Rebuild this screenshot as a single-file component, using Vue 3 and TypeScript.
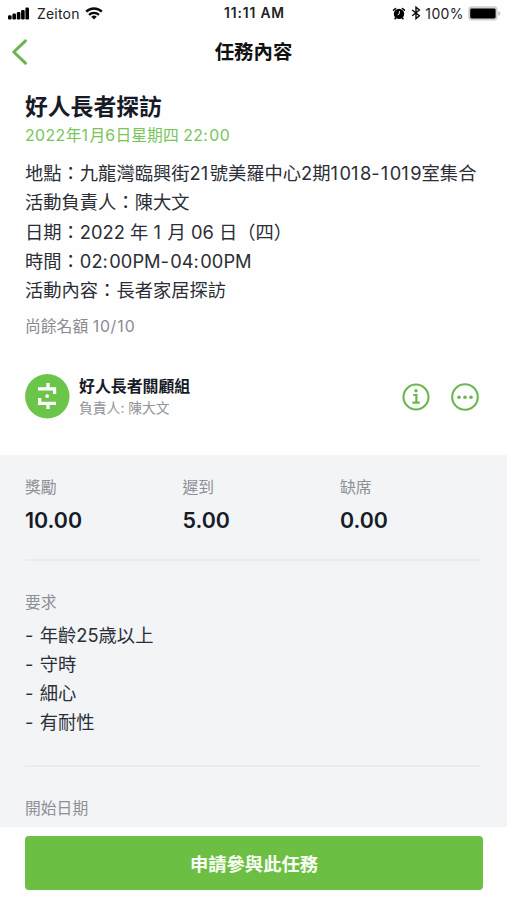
<script setup lang="ts">
interface Stat {
  label: string
  value: string
}

interface Run {
  text: string
  kind: string
}

const date = '2022年1月6日星期四 22:00'
const quota = '尚餘名額 10/10'

const details: string[] = [
  '地點：九龍灣臨興街21號美羅中心2期1018-1019室集合',
  '活動負責人：陳大文',
  '日期：2022 年 1 月 06 日（四）',
  '時間：02:00PM-04:00PM',
  '活動內容：長者家居探訪',
]

const stats: Stat[] = [
  { label: '獎勵', value: '10.00' },
  { label: '遲到', value: '5.00' },
  { label: '缺席', value: '0.00' },
]

const requirements: string[] = ['- 年齡25歳以上', '- 守時', '- 細心', '- 有耐性']

// Narrow Latin glyphs get extra tracking so that they sit evenly beside the ideographs.
function runs(text: string): Run[] {
  const parts = text.match(/[1:]+|[-/]+|[02-9A-Za-z]+|[^0-9A-Za-z:/-]+/g) ?? []
  return parts.map((part) => ({
    text: part,
    kind: /^[1:]/.test(part) ? 'narrow' : /^[-/]/.test(part) ? 'dash' : /^[0-9A-Za-z]/.test(part) ? 'latin' : 'han',
  }))
}
</script>

<template>
  <div class="screen">
    <div class="status">
      <div class="status-left">
        <svg class="signal" width="22" height="13" viewBox="0 0 22 13">
          <rect x="0" y="8.2" width="3.6" height="4.3" rx="1.2" />
          <rect x="4.4" y="6.6" width="3.6" height="5.9" rx="1.2" />
          <rect x="8.8" y="4.9" width="3.6" height="7.6" rx="1.2" />
          <rect x="13.1" y="2.9" width="3.6" height="9.6" rx="1.2" />
          <rect x="17.4" y="0.6" width="3.6" height="11.9" rx="1.2" />
        </svg>
        <span class="carrier">Zeiton</span>
        <svg class="wifi" width="18" height="13" viewBox="0 0 18 13" fill="none" stroke="#0a0a0a">
          <path d="M1.2 4.7a11 11 0 0 1 15.6 0" stroke-width="2.4" />
          <path d="M4 7.9a7 7 0 0 1 10 0" stroke-width="2.3" />
          <path d="M9 12.6 6.2 9.8a4 4 0 0 1 5.6 0z" fill="#0a0a0a" stroke="none" />
        </svg>
      </div>
      <span class="clock">11:11 AM</span>
      <div class="status-right">
        <svg class="alarm" width="14" height="13" viewBox="0 0 14 13">
          <circle cx="7" cy="6.9" r="5.2" />
          <path d="M1.6 3.2 3.6 1.5M12.4 3.2 10.4 1.5M3.8 10.8l-.8.9M10.2 10.8l.8.9" stroke="#0a0a0a" stroke-width="1.6" stroke-linecap="round" />
          <path d="M7.5 4.5 7.1 7.1 6 7.7" fill="none" stroke="#fff" stroke-width="0.9" stroke-linecap="round" />
        </svg>
        <svg class="bluetooth" width="10" height="14" viewBox="0 0 10 14" fill="none" stroke="#0a0a0a" stroke-width="1.4">
          <path d="m1.2 4 7.2 5.8L5 12.6V1.2L8.4 4 1.2 9.8" />
        </svg>
        <span class="percent">100%</span>
        <svg class="battery" width="33" height="15" viewBox="0 0 33 15">
          <rect x="0.2" y="0.3" width="29.4" height="14.2" rx="3.4" fill="#cfcfcf" />
          <rect x="2.2" y="2.5" width="25.4" height="10" rx="1.4" />
          <path d="M30.4 5v5a3.2 3.2 0 0 0 1.9-2.5A3.2 3.2 0 0 0 30.4 5z" fill="#bdbdbd" />
        </svg>
      </div>
    </div>

    <header class="nav">
      <svg class="back" width="17" height="26" viewBox="0 0 17 26" fill="none">
        <path d="M14.4 1.8 2.8 13l11.6 11.2" stroke="#69b551" stroke-width="3" stroke-linecap="round" stroke-linejoin="round" />
      </svg>
      <h1 class="nav-title">任務內容</h1>
    </header>

    <section class="intro">
      <h2 class="title">好人長者探訪</h2>
      <p class="date"><span v-for="(run, i) in runs(date)" :key="i" :class="run.kind">{{ run.text }}</span></p>
      <p v-for="line in details" :key="line" class="detail"><span v-for="(run, i) in runs(line)" :key="i" :class="run.kind">{{ run.text }}</span></p>
      <p class="quota"><span v-for="(run, i) in runs(quota)" :key="i" :class="run.kind">{{ run.text }}</span></p>
      <div class="host">
        <svg class="avatar" width="45" height="45" viewBox="0 0 45 45">
          <circle cx="22.3" cy="22.3" r="22.2" fill="#6cc54b" />
          <g fill="none" stroke="#fff" stroke-width="3.2">
            <path d="M23 9v6M13 14.9h16.6V20" />
            <path d="M23 35v-6M31 29.4H14.6V24" />
          </g>
          <circle cx="22.2" cy="22.1" r="1.9" fill="#fff" />
        </svg>
        <div class="host-text">
          <div class="host-name">好人長者關顧組</div>
          <div class="host-lead">負責人: 陳大文</div>
        </div>
        <svg class="action" width="28" height="28" viewBox="0 0 28 28" fill="none" stroke="#69b84e">
          <circle cx="14" cy="14" r="12.5" stroke-width="2.1" />
          <path d="M11.2 12h3.2v7.6M10.4 19.6h7.4" stroke-width="2.2" />
          <circle cx="14" cy="7.8" r="1.7" fill="#69b84e" stroke="none" />
        </svg>
        <svg class="action" width="28" height="28" viewBox="0 0 28 28" fill="#69b84e">
          <circle cx="14" cy="14" r="12.8" fill="none" stroke="#69b84e" stroke-width="2.1" />
          <circle cx="8" cy="14.2" r="1.8" />
          <circle cx="14" cy="14.2" r="1.8" />
          <circle cx="20" cy="14.2" r="1.8" />
        </svg>
      </div>
    </section>

    <main class="info">
      <div class="stats">
        <div v-for="stat in stats" :key="stat.label" class="stat">
          <div class="label">{{ stat.label }}</div>
          <div class="value">{{ stat.value }}</div>
        </div>
      </div>
      <div class="block">
        <div class="label">要求</div>
        <p v-for="item in requirements" :key="item" class="detail"><span v-for="(run, i) in runs(item)" :key="i" :class="run.kind">{{ run.text }}</span></p>
      </div>
      <div class="block">
        <div class="label">開始日期</div>
      </div>
    </main>

    <footer class="footer">
      <button class="apply" type="button">申請參與此任務</button>
    </footer>
  </div>
</template>

<style>
body {
  margin: 0;
  background: #fff;
}
</style>

<style scoped>
.screen {
  width: 507px;
  height: 900px;
  display: flex;
  flex-direction: column;
  overflow: hidden;
  background: #fefefe;
  color: #2b2e36;
  font-family: Inter, 'Noto Sans CJK TC', sans-serif;
}
h1,
h2,
p {
  margin: 0;
}
.status {
  display: grid;
  grid-template-columns: 1fr auto 1fr;
  align-items: center;
  height: 26px;
  flex: none;
  padding: 0 6px 0 8px;
  font-size: 14px;
  color: #222;
}
.status-left,
.status-right {
  display: flex;
  align-items: center;
}
.status-right {
  justify-content: flex-end;
}
.carrier {
  margin: 0 5px 0 7px;
  letter-spacing: 0.2px;
}
.clock {
  font-weight: 600;
  font-size: 13.8px;
  letter-spacing: 0.85px;
}
.bluetooth {
  margin: 0 4px 0 5px;
}
.percent {
  margin-right: 4px;
  letter-spacing: 0.4px;
}
.nav {
  display: grid;
  grid-template-columns: 40px 1fr 40px;
  align-items: center;
  height: 52px;
  flex: none;
}
.back {
  margin-left: 11px;
}
.nav-title {
  text-align: center;
  font-size: 19.4px;
  line-height: 28px;
  font-weight: 700;
  color: #111;
}
.intro {
  height: 377px;
  box-sizing: border-box;
  padding: 13px 28px 0 25px;
  flex: none;
}
.title {
  font-size: 22.8px;
  line-height: 32px;
  font-weight: 700;
  color: #171b27;
}
.date {
  font-size: 15.8px;
  line-height: 26px;
  margin-bottom: 10px;
  white-space: nowrap;
  color: #78c55a;
}
.narrow {
  letter-spacing: 1.5px;
}
.dash {
  letter-spacing: 1.2px;
}
.date .latin,
.quota .latin {
  letter-spacing: 0.45px;
}
.quota .narrow,
.quota .dash {
  letter-spacing: 1px;
}
.detail {
  font-size: 18.3px;
  line-height: 29.3px;
  white-space: nowrap;
}
.quota {
  margin-top: 10px;
  font-size: 15.8px;
  line-height: 24px;
  color: #888b91;
}
.host {
  display: flex;
  align-items: center;
  margin-top: 35px;
}
.host-text {
  flex: 1;
  margin-left: 9px;
}
.host-name {
  font-size: 15.9px;
  line-height: 22px;
  font-weight: 700;
  color: #171b27;
}
.host-lead {
  font-size: 13.8px;
  line-height: 20px;
  color: #92959a;
}
.action + .action {
  margin-left: 21px;
}
.info {
  height: 372px;
  box-sizing: border-box;
  flex: none;
  padding: 0 26px 0 25px;
  background: #f2f4f6;
  overflow: hidden;
}
.stats {
  display: grid;
  grid-template-columns: 157.5px 157.5px 1fr;
  height: 104px;
  padding-top: 21px;
  box-sizing: border-box;
}
.label {
  font-size: 15.8px;
  line-height: 24px;
  color: #8d9095;
}
.value {
  margin-top: 4.5px;
  font-size: 21.4px;
  line-height: 30px;
  font-weight: 600;
  color: #171b27;
}
.block {
  height: 206px;
  box-sizing: border-box;
  border-top: 2px solid #e9ebed;
  padding-top: 30px;
}
.block .label {
  margin-bottom: 5.5px;
}
.footer {
  flex: 1;
  padding: 9px 24px 0 25px;
}
.apply {
  display: block;
  width: 100%;
  height: 54px;
  border: 0;
  border-radius: 4px;
  background: #6dbf44;
  color: #fafff7;
  font-family: inherit;
  font-size: 18.3px;
  font-weight: 700;
}
</style>
